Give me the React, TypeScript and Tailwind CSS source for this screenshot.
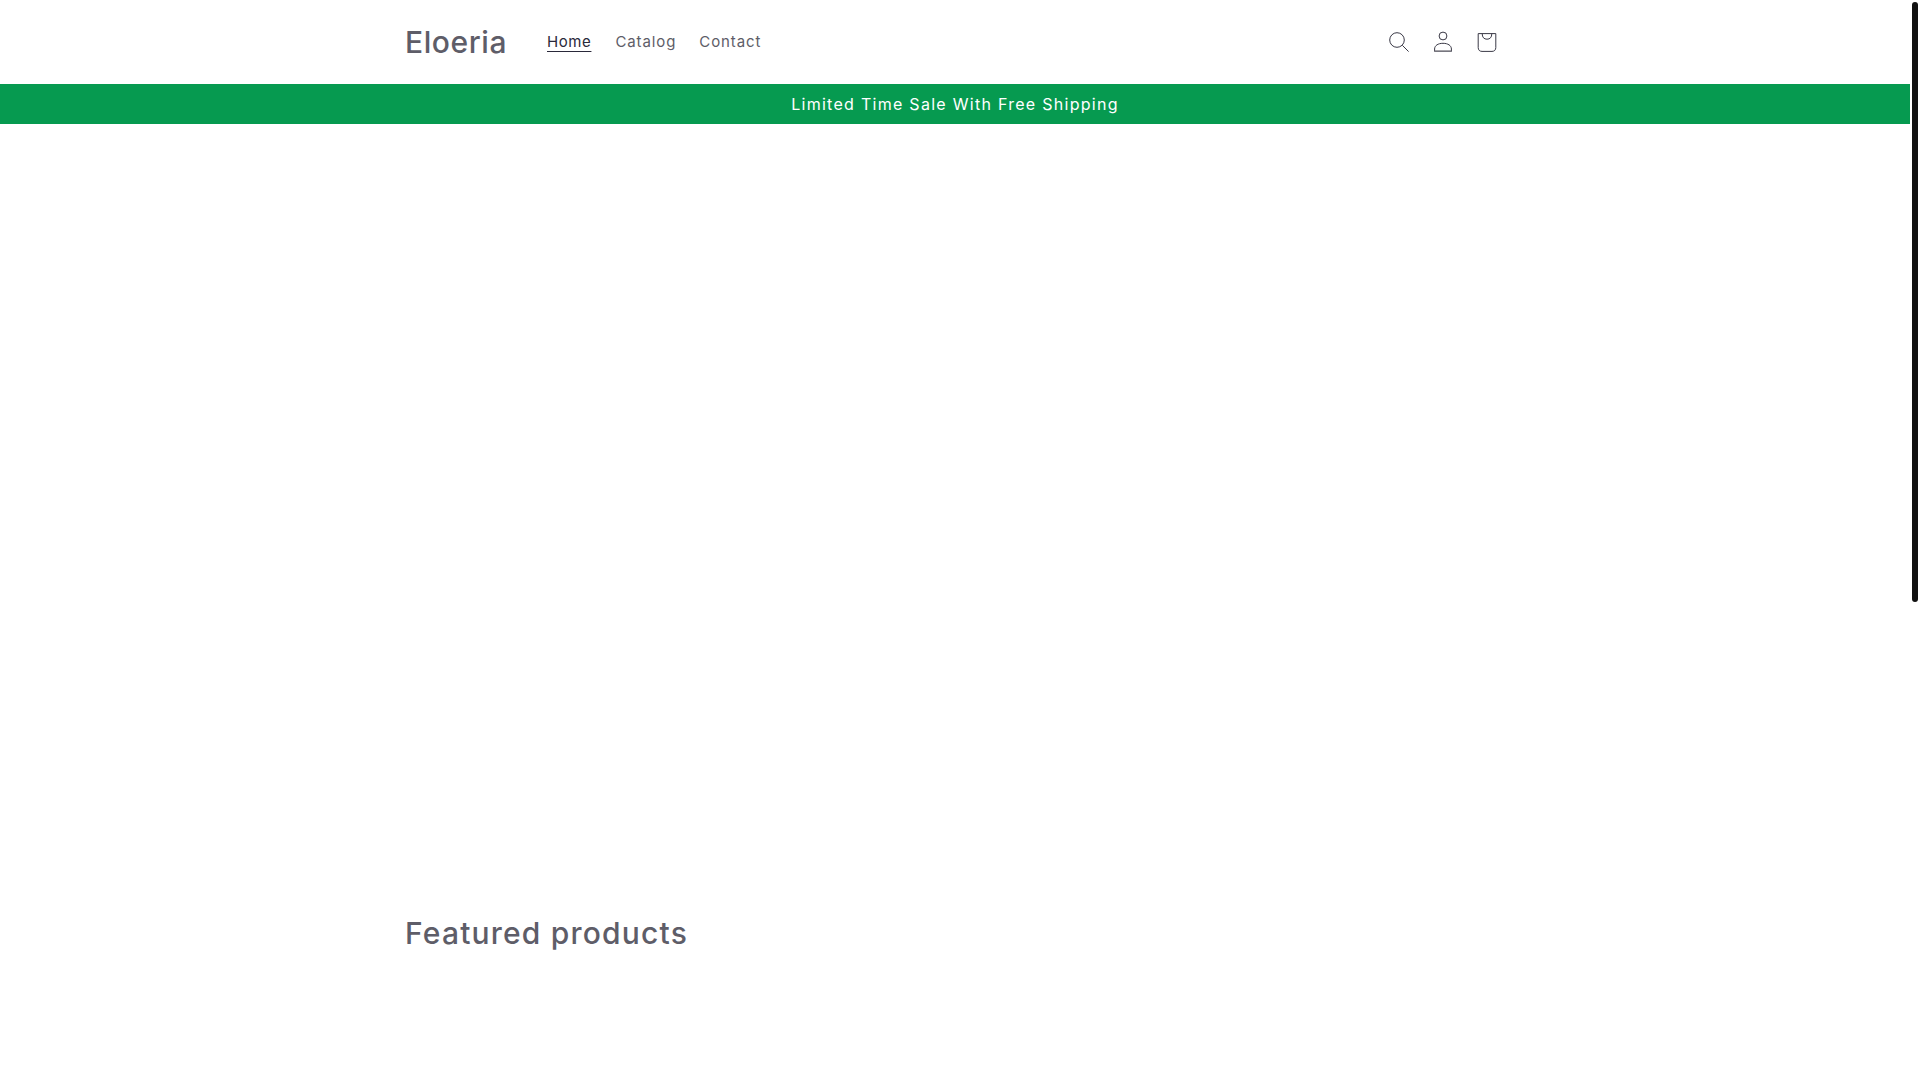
export default function App() {
  return (
    <div className="flex h-screen w-full overflow-hidden bg-white font-['Inter','Liberation_Sans',sans-serif]">
      <div className="flex w-[1910px] flex-col">
        <header className="flex h-[84px] items-center pl-[405px] pr-[401px]">
          <a className="w-[130px] text-[30px] font-medium leading-none tracking-[0.02em] text-[#5e5d68]">Eloeria</a>
          <nav className="flex items-center text-[15px] tracking-[0.06em] text-[#5e5d68]">
            <a className="py-[4px] pl-[12px] pr-[12px]"><span className="tracking-[0.04em] text-[#2a293a] underline underline-offset-[4px]">Home</span></a>
            <a className="py-[4px] pl-[12px] pr-[11px]">Catalog</a>
            <a className="px-[12px] py-[4px]">Contact</a>
          </nav>
          <div className="ml-auto flex items-center text-[#3a3946]">
            <button className="flex h-[44px] w-[44px] items-center justify-center">
              <svg width="22" height="22" viewBox="0 0 22 22" fill="none" stroke="currentColor" strokeWidth="1">
                <circle cx="9" cy="9" r="7.3" />
                <path d="M14.3 14.3 L20.6 20.6" />
              </svg>
            </button>
            <button className="flex h-[44px] w-[44px] items-center justify-center">
              <svg width="22" height="22" viewBox="0 0 22 22" fill="none" stroke="currentColor" strokeWidth="1">
                <circle cx="11" cy="5" r="3.9" />
                <path d="M2.6 20.4 V18 C2.6 14.6 6 12.3 11 12.3 C16 12.3 19.4 14.6 19.4 18 V20.4 Z" />
                <path d="M2.6 20.2 H19.4" strokeWidth="1.6" stroke="#77767f" />
              </svg>
            </button>
            <button className="flex h-[44px] w-[44px] items-center justify-center">
              <svg width="22" height="22" viewBox="0 0 22 22" fill="none" stroke="currentColor" strokeWidth="1">
                <path d="M2.2 2.6 H19.8 V16.5 C19.8 19 18.4 20.4 16 20.4 H6 C3.6 20.4 2.2 19 2.2 16.5 Z" />
                <path d="M6.2 2.6 C6.2 6.4 8 8.2 11 8.2 C14 8.2 15.8 6.4 15.8 2.6" />
              </svg>
            </button>
          </div>
        </header>
        <div className="flex h-[40px] items-center justify-center bg-[#069a50] text-[16px] tracking-[0.08em] text-white">
          Limited Time Sale With Free Shipping
        </div>
        <main className="flex-1 pl-[405px] pt-[790px]">
          <h2 className="text-[30px] font-medium leading-[1.3] tracking-[0.04em] text-[#5e5d68]">Featured products</h2>
        </main>
      </div>
      <aside className="flex-1 pl-[2px] pt-[2px]">
        <div className="h-[600px] w-[6px] rounded-[3px] bg-[#111111]" />
      </aside>
    </div>
  );
}
